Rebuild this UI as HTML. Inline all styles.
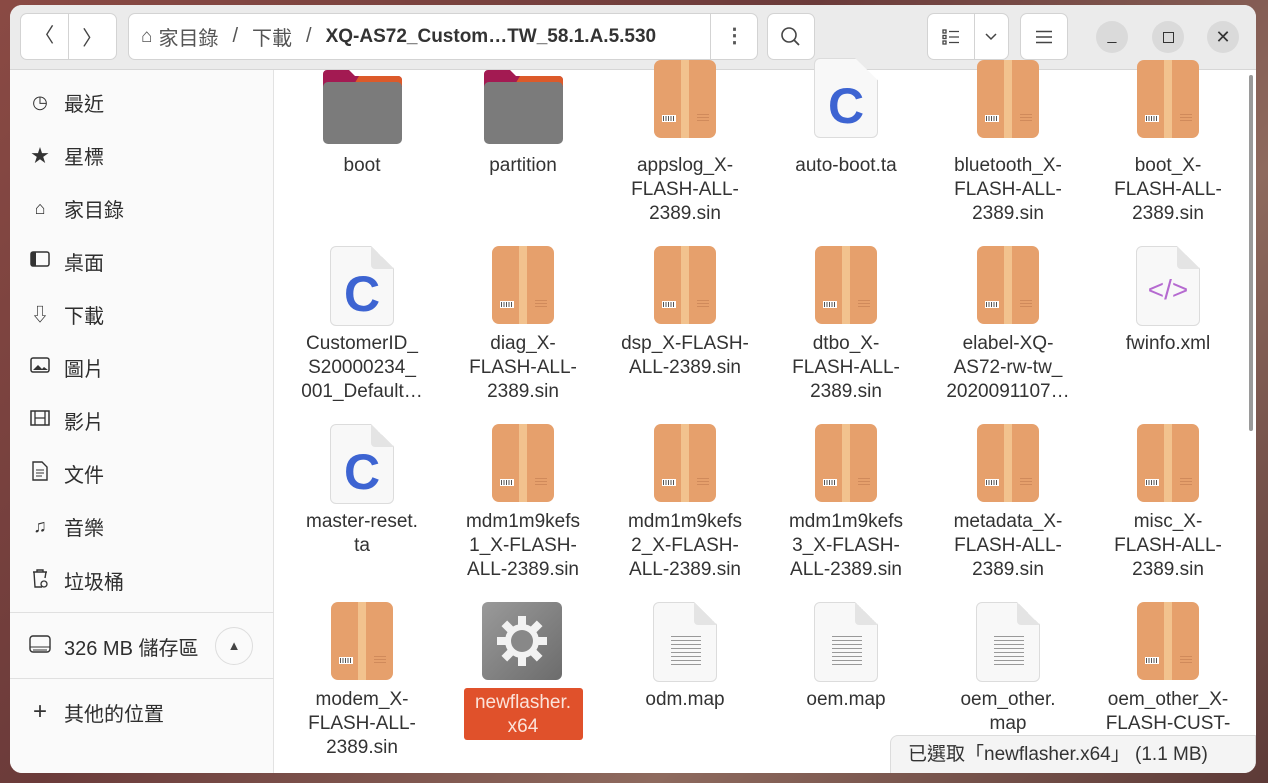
<!DOCTYPE html>
<html><head><meta charset="utf-8"><style>
*{margin:0;padding:0;box-sizing:border-box}
body{width:1268px;height:783px;overflow:hidden;background:linear-gradient(135deg,#8a4a44,#6b3b3a 40%,#8e6a5e 70%,#5d3a37);font-family:"Liberation Sans","Noto Sans CJK TC",sans-serif;position:relative}
.win{position:absolute;left:10px;top:5px;width:1246px;height:768px;background:#fff;border-radius:12px;overflow:hidden}
.hdr{position:absolute;left:0;top:0;width:1246px;height:65px;background:#ebebeb;border-bottom:1px solid #d6d6d6}
.btn{position:absolute;top:8px;height:47px;background:#fff;border:1px solid #d3d3d3;border-radius:7px;color:#444;display:flex;align-items:center;justify-content:center;font-size:20px}
.side{position:absolute;left:0;top:65px;width:264px;height:703px;background:#fafafa;border-right:1px solid #e2e2e2}
.si{position:absolute;left:18px;height:30px;display:flex;align-items:center;font-size:20px;color:#2e2e2e}
.si .ic{width:24px;margin-right:12px;text-align:center;color:#333;font-size:18px}
.sep{position:absolute;left:0;width:264px;height:1px;background:#e0e0e0}
.it{position:absolute;width:160px;text-align:center}
.lbl{position:absolute;left:0;width:160px;top:86px;font-size:19px;line-height:24px;color:#333;text-align:center}
.pkg{position:absolute;left:49px;top:0;width:62px;height:78px;border-radius:7px;background:#e6a06c}
.pkg:before{content:"";position:absolute;left:27px;top:0;width:8px;height:78px;background:#f2c28e}
.pkg .bc{position:absolute;left:8px;top:55px;width:14px;height:7px;background:#fff;border:1px solid #fff;background-image:repeating-linear-gradient(90deg,#555 0 1px,#fff 1px 2.5px)}
.pkg .ln{position:absolute;left:43px;top:54px;width:12px;height:9px;background:repeating-linear-gradient(#d08a5b 0 1px,transparent 1px 3px)}
.doc{position:absolute;left:48px;top:0;width:64px;height:80px;background:#f8f8f8;border:1px solid #dcdcdc;border-radius:6px;clip-path:polygon(0 0,64% 0,100% 28%,100% 100%,0 100%)}
.fold{position:absolute;left:89px;top:0;width:23px;height:23px;background:linear-gradient(225deg,transparent 50%,#e4e4e4 50%);border-radius:0 0 0 4px}
.C{position:absolute;left:48px;top:18px;width:64px;text-align:center;font-size:50px;font-weight:bold;color:#3d64d2;line-height:60px}
.lines{position:absolute;left:66px;top:34px;width:30px;height:30px;background:repeating-linear-gradient(#999 0 1px,transparent 1px 4px)}
.fold2{position:absolute;left:41px;top:2px;width:79px;height:74px}
</style></head><body>
<div class="win">
<div class="hdr">
 <div class="btn" style="left:10px;width:97px"><span style="width:48px;text-align:center;border-right:1px solid #d3d3d3;height:45px;line-height:45px">〈</span><span style="width:48px;text-align:center">〉</span></div>
 <div class="btn" style="left:118px;width:630px;justify-content:flex-start;padding-left:12px;font-size:20px;color:#555">
  <span style="font-size:19px;margin-right:6px">⌂</span>家目錄 <span style="margin:0 14px">/</span>下載<span style="margin:0 14px">/</span><b style="color:#333;font-size:19px">XQ-AS72_Custom…TW_58.1.A.5.530</b>
  <span style="position:absolute;left:581px;top:0;width:48px;height:45px;border-left:1px solid #d3d3d3;text-align:center;line-height:45px;font-weight:bold">⋮</span></div>
 <div class="btn" style="left:757px;width:48px"><svg width="22" height="22" viewBox="0 0 22 22"><circle cx="9" cy="9" r="7" fill="none" stroke="#444" stroke-width="1.6"/><path d="M14 14l5 5" stroke="#444" stroke-width="1.8"/></svg></div>
 <div class="btn" style="left:917px;width:82px"><span style="width:48px;border-right:1px solid #d3d3d3;height:45px;display:flex;align-items:center;justify-content:center"><svg width="18" height="16"><g fill="none" stroke="#444" stroke-width="1.3"><rect x="1" y="1" width="3" height="3"/><rect x="1" y="6.5" width="3" height="3"/><rect x="1" y="12" width="3" height="3"/><path d="M7 2.5h10M7 8h10M7 13.5h10"/></g></svg></span><span style="width:34px;text-align:center"><svg width="14" height="10"><path d="M2 2l5 5 5-5" fill="none" stroke="#444" stroke-width="1.5"/></svg></span></div>
 <div class="btn" style="left:1010px;width:48px"><svg width="16" height="14"><path d="M0 1.5h16M0 7h16M0 12.5h16" stroke="#444" stroke-width="1.4"/></svg></div>
 <div style="position:absolute;left:1086px;top:16px;width:32px;height:32px;border-radius:50%;background:#dadada;text-align:center;line-height:30px;color:#333">_</div>
 <div style="position:absolute;left:1142px;top:16px;width:32px;height:32px;border-radius:50%;background:#dadada"><div style="position:absolute;left:11px;top:11px;width:11px;height:11px;border:1.5px solid #333"></div></div>
 <div style="position:absolute;left:1197px;top:16px;width:32px;height:32px;border-radius:50%;background:#dadada;text-align:center;line-height:32px;color:#333;font-size:18px">✕</div>
</div>
<div class="side">
 <div class="si" style="top:17px"><span class="ic">◷</span>最近</div>
 <div class="si" style="top:70px"><span class="ic">★</span>星標</div>
 <div class="si" style="top:123px"><span class="ic">⌂</span>家目錄</div>
 <div class="si" style="top:176px"><span class="ic"><svg width="20" height="16"><rect x="1" y="1" width="18" height="14" rx="2" fill="none" stroke="#333" stroke-width="1.5"/><rect x="1" y="1" width="5" height="14" fill="#333"/></svg></span>桌面</div>
 <div class="si" style="top:229px"><span class="ic">⇩</span>下載</div>
 <div class="si" style="top:282px"><span class="ic"><svg width="20" height="16"><rect x="1" y="1" width="18" height="14" rx="2" fill="none" stroke="#333" stroke-width="1.5"/><path d="M3 13l5-5 4 4 2-2 4 3z" fill="#333"/></svg></span>圖片</div>
 <div class="si" style="top:335px"><span class="ic"><svg width="20" height="16"><rect x="1" y="1" width="18" height="14" fill="none" stroke="#333" stroke-width="1.5"/><path d="M5 1v14M15 1v14M5 8h10" stroke="#333" stroke-width="1.3"/></svg></span>影片</div>
 <div class="si" style="top:388px"><span class="ic"><svg width="16" height="20"><path d="M1 1h9l5 5v13H1z" fill="none" stroke="#333" stroke-width="1.4"/><path d="M4 9h8M4 12h8M4 15h6" stroke="#333"/></svg></span>文件</div>
 <div class="si" style="top:441px"><span class="ic">♫</span>音樂</div>
 <div class="si" style="top:495px"><span class="ic"><svg width="18" height="20"><path d="M2 4h14M6 4V2h6v2M3 4l1 15h7M15 4l-1 6" fill="none" stroke="#333" stroke-width="1.4"/><circle cx="13" cy="16" r="3" fill="none" stroke="#333" stroke-width="1.3"/></svg></span>垃圾桶</div>
 <div class="sep" style="top:542px"></div>
 <div class="si" style="top:561px"><span class="ic"><svg width="22" height="18"><rect x="1" y="1" width="20" height="16" rx="3" fill="none" stroke="#333" stroke-width="1.4"/><path d="M1 12h20M4 15h14" stroke="#333"/></svg></span>326 MB 儲存區</div>
 <div style="position:absolute;left:205px;top:557px;width:38px;height:38px;border-radius:50%;border:1px solid #ddd;text-align:center;line-height:36px;font-size:13px;color:#444">▲</div>
 <div class="sep" style="top:608px"></div>
 <div class="si" style="top:627px"><span class="ic" style="font-size:24px">+</span>其他的位置</div>
</div>
<div style="position:absolute;left:1239px;top:70px;width:4px;height:356px;background:#9a9a9a;border-radius:2px"></div>

<div class="it" style="left:272px;top:63px"><svg class="fold2" viewBox="0 0 79 74"><path d="M4 0h22l6 6h43a4 4 0 0 1 4 4v12H0V4a4 4 0 0 1 4-4z" fill="#a31a52"/><path d="M36 6h39a4 4 0 0 1 4 4v6H30z" fill="#dc5a2a"/><rect x="0" y="12" width="79" height="62" rx="5" fill="#7b7b7b"/></svg><div class="lbl">boot</div></div>
<div class="it" style="left:433px;top:63px"><svg class="fold2" viewBox="0 0 79 74"><path d="M4 0h22l6 6h43a4 4 0 0 1 4 4v12H0V4a4 4 0 0 1 4-4z" fill="#a31a52"/><path d="M36 6h39a4 4 0 0 1 4 4v6H30z" fill="#dc5a2a"/><rect x="0" y="12" width="79" height="62" rx="5" fill="#7b7b7b"/></svg><div class="lbl">partition</div></div>
<div class="it" style="left:595px;top:63px"><div class="pkg" style="top:-8px"><i class="bc"></i><i class="ln"></i></div><div class="lbl">appslog_X-<br>FLASH-ALL-<br>2389.sin</div></div>
<div class="it" style="left:756px;top:63px"><div class="doc" style="top:-10px"></div><div class="C" style="top:8px">C</div><div class="lbl">auto-boot.ta</div></div>
<div class="it" style="left:918px;top:63px"><div class="pkg" style="top:-8px"><i class="bc"></i><i class="ln"></i></div><div class="lbl">bluetooth_X-<br>FLASH-ALL-<br>2389.sin</div></div>
<div class="it" style="left:1078px;top:63px"><div class="pkg" style="top:-8px"><i class="bc"></i><i class="ln"></i></div><div class="lbl">boot_X-<br>FLASH-ALL-<br>2389.sin</div></div>

<div class="it" style="left:272px;top:241px"><div class="doc"></div><div class="fold"></div><div class="C">C</div><div class="lbl">CustomerID_<br>S20000234_<br>001_Default…</div></div>
<div class="it" style="left:433px;top:241px"><div class="pkg"><i class="bc"></i><i class="ln"></i></div><div class="lbl">diag_X-<br>FLASH-ALL-<br>2389.sin</div></div>
<div class="it" style="left:595px;top:241px"><div class="pkg"><i class="bc"></i><i class="ln"></i></div><div class="lbl">dsp_X-FLASH-<br>ALL-2389.sin</div></div>
<div class="it" style="left:756px;top:241px"><div class="pkg"><i class="bc"></i><i class="ln"></i></div><div class="lbl">dtbo_X-<br>FLASH-ALL-<br>2389.sin</div></div>
<div class="it" style="left:918px;top:241px"><div class="pkg"><i class="bc"></i><i class="ln"></i></div><div class="lbl">elabel-XQ-<br>AS72-rw-tw_<br>2020091107…</div></div>
<div class="it" style="left:1078px;top:241px"><div class="doc"></div><div class="fold"></div><div class="C" style="font-size:28px;font-weight:normal;color:#b56ad0;top:14px">&lt;/&gt;</div><div class="lbl">fwinfo.xml</div></div>

<div class="it" style="left:272px;top:419px"><div class="doc"></div><div class="fold"></div><div class="C">C</div><div class="lbl">master-reset.<br>ta</div></div>
<div class="it" style="left:433px;top:419px"><div class="pkg"><i class="bc"></i><i class="ln"></i></div><div class="lbl">mdm1m9kefs<br>1_X-FLASH-<br>ALL-2389.sin</div></div>
<div class="it" style="left:595px;top:419px"><div class="pkg"><i class="bc"></i><i class="ln"></i></div><div class="lbl">mdm1m9kefs<br>2_X-FLASH-<br>ALL-2389.sin</div></div>
<div class="it" style="left:756px;top:419px"><div class="pkg"><i class="bc"></i><i class="ln"></i></div><div class="lbl">mdm1m9kefs<br>3_X-FLASH-<br>ALL-2389.sin</div></div>
<div class="it" style="left:918px;top:419px"><div class="pkg"><i class="bc"></i><i class="ln"></i></div><div class="lbl">metadata_X-<br>FLASH-ALL-<br>2389.sin</div></div>
<div class="it" style="left:1078px;top:419px"><div class="pkg"><i class="bc"></i><i class="ln"></i></div><div class="lbl">misc_X-<br>FLASH-ALL-<br>2389.sin</div></div>

<div class="it" style="left:272px;top:597px"><div class="pkg"><i class="bc"></i><i class="ln"></i></div><div class="lbl">modem_X-<br>FLASH-ALL-<br>2389.sin</div></div>
<div class="it" style="left:433px;top:597px"><div style="position:absolute;left:39px;top:0;width:80px;height:78px;border-radius:6px;background:linear-gradient(135deg,#9a9a9a,#6c6c6c)"><svg width="80" height="78" viewBox="0 0 80 78"><g transform="translate(40,39)" fill="#f2f2f2"><circle r="17"/><g id="t"><rect x="-4" y="-25" width="8" height="10"/></g><use href="#t" transform="rotate(45)"/><use href="#t" transform="rotate(90)"/><use href="#t" transform="rotate(135)"/><use href="#t" transform="rotate(180)"/><use href="#t" transform="rotate(225)"/><use href="#t" transform="rotate(270)"/><use href="#t" transform="rotate(315)"/><circle r="11" fill="#888"/></g></svg></div>
 <div style="position:absolute;left:21px;top:86px;width:119px;height:52px;background:#e0512b;border-radius:3px"></div><div class="lbl" style="color:#fbe3da;top:89px">newflasher.<br>x64</div></div>
<div class="it" style="left:595px;top:597px"><div class="doc"></div><div class="fold"></div><div class="lines"></div><div class="lbl">odm.map</div></div>
<div class="it" style="left:756px;top:597px"><div class="doc"></div><div class="fold"></div><div class="lines"></div><div class="lbl">oem.map</div></div>
<div class="it" style="left:918px;top:597px"><div class="doc"></div><div class="fold"></div><div class="lines"></div><div class="lbl">oem_other.<br>map</div></div>
<div class="it" style="left:1078px;top:597px"><div class="pkg"><i class="bc"></i><i class="ln"></i></div><div class="lbl">oem_other_X-<br>FLASH-CUST-</div></div>

<div style="position:absolute;left:880px;top:730px;width:366px;height:40px;background:#f4f4f4;border:1px solid #dcdcdc;border-radius:8px 0 0 0;font-size:19px;color:#333;line-height:38px;padding-left:17px">已選取「newflasher.x64」 (1.1 MB)</div>
</div>
</body></html>
